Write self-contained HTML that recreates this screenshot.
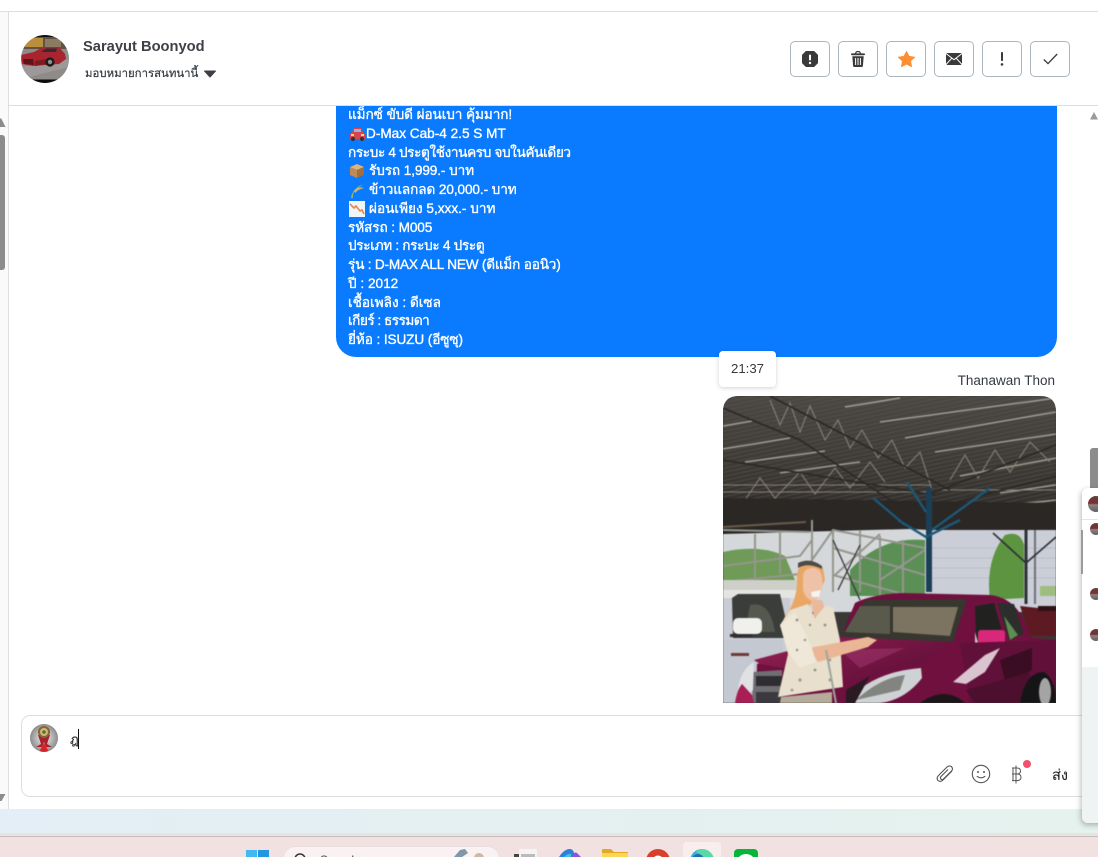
<!DOCTYPE html>
<html lang="th">
<head>
<meta charset="utf-8">
<title>Chat</title>
<style>
html,body{margin:0;padding:0;width:1098px;height:857px;overflow:hidden;background:#fff;}
body{position:relative;font-family:"Liberation Sans","Noto Sans CJK SC",sans-serif;color:#343a40;}
.a{position:absolute;}
.btn{position:absolute;top:41px;width:38px;height:34px;border:1px solid #adb5bd;border-radius:5px;background:#fff;display:flex;align-items:center;justify-content:center;}
.ln{position:absolute;left:348px;height:19px;line-height:19px;font-size:13.6px;color:#fff;white-space:nowrap;font-weight:500;-webkit-text-stroke:.35px #fff;}
</style>
</head>
<body>
<!-- window frame -->
<div class="a" style="left:0;top:0;width:1098px;height:11px;background:#fff"></div>
<div class="a" style="left:0;top:11px;width:1098px;height:1px;background:#dedede"></div>
<div class="a" style="left:0;top:12px;width:8px;height:797px;background:#fafafa"></div>
<div class="a" style="left:8px;top:12px;width:1px;height:797px;background:#dedede"></div>

<!-- left scrollbar -->
<svg class="a" style="left:0;top:118px" width="8" height="10"><path d="M0 9 V1 L1 0 L5.5 9Z" fill="#8c8c8c"/></svg>
<div class="a" style="left:0;top:135px;width:5px;height:135px;background:#8c8c8c;border-radius:0 3px 3px 0"></div>
<svg class="a" style="left:0;top:793px" width="8" height="10"><path d="M0 1 H5.5 L1.5 8 H0Z" fill="#8c8c8c"/></svg>

<!-- header -->
<div class="a" style="left:9px;top:105px;width:1089px;height:1px;background:#dedede"></div>
<svg class="a" style="left:21px;top:35px" width="48" height="48" viewBox="0 0 48 48">
<defs><clipPath id="av"><circle cx="24" cy="24" r="24"/></clipPath></defs>
<g clip-path="url(#av)" style="filter:blur(.35px)">
<rect width="48" height="48" fill="#8f8b89"/>
<rect width="48" height="14" fill="#5f5344"/>
<rect x="4" y="3" width="18" height="9" fill="#b98f3e"/>
<rect x="24" y="4" width="16" height="8" fill="#8d7a63"/>
<rect y="0" width="48" height="2" fill="#111"/>
<rect y="44.5" width="48" height="3.5" fill="#0c0c0c"/>
<path d="M0 32 L48 24 L48 32 L0 44Z" fill="#a9a4a1" opacity=".6"/>
<path d="M0 20 L13 17 L21 12.5 L38 12 L44 19 L45 24 L38 29 L12 31 L1 29Z" fill="#a8242e"/>
<path d="M20 17 L25 13.5 L36 13.5 L35 17Z" fill="#2f2c33"/>
<path d="M2 24 L12 24 L13 30 L3 29Z" fill="#5a1518"/>
<path d="M14 26 L26 24 L30 28 L14 31Z" fill="#7c1a20"/>
<circle cx="29" cy="27" r="4.6" fill="#1c1c1c"/>
<circle cx="29" cy="27" r="2.2" fill="#8f8f8f"/>
</g>
</svg>
<div class="a" style="left:83px;top:38px;font-size:14.7px;font-weight:700;line-height:18px;color:#3d4146;white-space:nowrap">Sarayut Boonyod</div>
<div class="a" style="left:85px;top:66px;font-size:11.4px;line-height:16px;color:#343a40;white-space:nowrap;-webkit-text-stroke:.2px #343a40">มอบหมายการสนทนานี้</div>
<svg class="a" style="left:204px;top:70px" width="12" height="8"><path d="M0.5 1 H11.5 L6 7Z" fill="#3d4146" stroke="#3d4146" stroke-linejoin="round"/></svg>

<!-- header buttons -->
<div class="btn" style="left:790px"><svg width="16" height="16" viewBox="0 0 16 16"><path d="M5 0 H11 L16 5 V11 L11 16 H5 L0 11 V5Z" fill="#3a3a3a" stroke="#3a3a3a" stroke-width="1.6" stroke-linejoin="round"/><rect x="7" y="3.5" width="2" height="6" rx="1" fill="#fff"/><circle cx="8" cy="12" r="1.2" fill="#fff"/></svg></div>
<div class="btn" style="left:838px"><svg width="14" height="16" viewBox="0 0 14 16"><rect x="0" y="2.4" width="14" height="1.8" rx=".9" fill="#3a3a3a"/><path d="M4.5 2.5 Q5 .5 7 .5 Q9 .5 9.5 2.5" fill="none" stroke="#3a3a3a" stroke-width="1.2"/><path d="M1.3 5.2 H12.7 L11.9 15 Q11.8 16 10.8 16 H3.2 Q2.2 16 2.1 15Z" fill="#3a3a3a"/><path d="M4.6 7 V14 M7 7 V14 M9.4 7 V14" stroke="#fff" stroke-width="1"/></svg></div>
<div class="btn" style="left:886px"><svg width="17" height="16" viewBox="0 0 17 16"><path d="M8.5 .6 L11 5.4 L16.5 6.2 L12.5 10 L13.5 15.5 L8.5 12.9 L3.5 15.5 L4.5 10 L.5 6.2 L6 5.4Z" fill="#fd8f32" stroke="#fd8f32" stroke-linejoin="round"/></svg></div>
<div class="btn" style="left:934px"><svg width="16" height="12" viewBox="0 0 16 12"><rect width="16" height="12" rx="1.2" fill="#3a3a3a"/><path d="M0 .5 L8 6.8 L16 .5 M0 11.5 L5.8 5.2 M16 11.5 L10.2 5.2" fill="none" stroke="#fff" stroke-width="1"/></svg></div>
<div class="btn" style="left:982px"><svg width="4" height="14" viewBox="0 0 4 14"><rect x="1" y="0" width="2" height="9" rx=".8" fill="#3a3a3a"/><circle cx="2" cy="12.4" r="1.3" fill="#3a3a3a"/></svg></div>
<div class="btn" style="left:1030px"><svg width="15" height="12" viewBox="0 0 15 12"><path d="M.8 6.5 L5 10.6 L14.2 1" fill="none" stroke="#3a3a3a" stroke-width="1.3"/></svg></div>

<!-- bubble -->
<div class="a" style="left:336px;top:106px;width:721px;height:251px;background:#0a7bff;border-radius:0 0 20px 20px"></div>
<div class="ln" style="top:105px;letter-spacing:-.1px">แม็กซ์ ขับดี ผ่อนเบา คุ้มมาก!</div>
<svg class="a" style="left:349px;top:127px" width="17" height="14" viewBox="0 0 17 14"><path d="M3 5 L5 1 H12 L14 5 L16 6.5 V12 H1 V6.5Z" fill="#d8434e"/><rect x="5" y="2" width="7" height="3" fill="#8fb7d8"/><circle cx="4" cy="12" r="2" fill="#333"/><circle cx="13" cy="12" r="2" fill="#333"/><rect x="2" y="7" width="3" height="2" fill="#ffd76a"/><rect x="12" y="7" width="3" height="2" fill="#ffd76a"/></svg>
<div class="ln" style="left:366px;top:124px">D-Max Cab-4 2.5 S MT</div>
<div class="ln" style="top:143px;letter-spacing:-.37px">กระบะ 4 ประตูใช้งานครบ จบในคันเดียว</div>
<svg class="a" style="left:349px;top:163px" width="16" height="16" viewBox="0 0 16 16"><path d="M8 1 L15 4 L8 7 L1 4Z" fill="#e0b27c"/><path d="M1 4 L8 7 V15 L1 12Z" fill="#c08a52"/><path d="M15 4 L8 7 V15 L15 12Z" fill="#a06f3e"/></svg>
<div class="ln" style="left:369px;top:161px;letter-spacing:-.1px">รับรถ 1,999.- บาท</div>
<svg class="a" style="left:349px;top:182px" width="16" height="16" viewBox="0 0 16 16"><path d="M2 16 Q3 7 14 2 Q9 6 5 10 Q4 12 4 16Z" fill="#8ab85c"/><path d="M5 9 Q8 4 15 6 Q10 7 6 11Z" fill="#c9b36a"/></svg>
<div class="ln" style="left:369px;top:180px;letter-spacing:-.1px">ข้าวแลกลด 20,000.- บาท</div>
<svg class="a" style="left:349px;top:201px" width="16" height="16" viewBox="0 0 16 16"><rect width="16" height="16" fill="#f2f5f8"/><path d="M1 3 L5 7 L7 5 L11 10 L13 9 L15 13" fill="none" stroke="#e2884e" stroke-width="1.6"/></svg>
<div class="ln" style="left:369px;top:199px">ผ่อนเพียง 5,xxx.- บาท</div>
<div class="ln" style="top:218px;letter-spacing:-.1px">รหัสรถ : M005</div>
<div class="ln" style="top:236px;letter-spacing:-.32px">ประเภท : กระบะ 4 ประตู</div>
<div class="ln" style="top:255px;letter-spacing:-.2px;left:348px">รุ่น : D-MAX ALL NEW (ดีแม็ก ออนิว)</div>
<div class="ln" style="top:274px">ปี : 2012</div>
<div class="ln" style="top:293px">เชื้อเพลิง : ดีเซล</div>
<div class="ln" style="top:311px;letter-spacing:-.5px">เกียร์ : ธรรมดา</div>
<div class="ln" style="top:330px;letter-spacing:-.1px">ยี่ห้อ : ISUZU (อีซูซุ)</div>

<!-- time tip -->
<div class="a" style="left:719px;top:351px;width:57px;height:36px;background:#fff;border-radius:4px;box-shadow:0 1px 5px rgba(0,0,0,.18);font-size:13.2px;line-height:36px;text-align:center;color:#343a40">21:37</div>
<div class="a" style="right:43px;top:373px;font-size:13.5px;line-height:16px;color:#343a40;white-space:nowrap">Thanawan Thon</div>

<!-- photo -->
<svg class="a" style="left:723px;top:396px" width="333" height="307" viewBox="723 396 333 307">
<defs>
<clipPath id="ph"><path d="M739 396 H1040 Q1056 396 1056 412 V703 H723 V412 Q723 396 739 396Z"/></clipPath>
<linearGradient id="roof" x1="0" y1="0" x2="0" y2="1"><stop offset="0" stop-color="#4b4844"/><stop offset=".55" stop-color="#3a3733"/><stop offset="1" stop-color="#232120"/></linearGradient>
<linearGradient id="hood" x1="0" y1="0" x2="1" y2=".6"><stop offset="0" stop-color="#9a2158"/><stop offset=".5" stop-color="#7a1745"/><stop offset="1" stop-color="#62103a"/></linearGradient>
<pattern id="ribs" width="7" height="4" patternUnits="userSpaceOnUse" patternTransform="rotate(-12)"><rect width="7" height="1" fill="#5a5750" opacity=".55"/></pattern>
</defs>
<g clip-path="url(#ph)">
<rect x="723" y="396" width="333" height="307" fill="#3a3835"/>
<g style="filter:blur(.55px)">
<rect x="723" y="396" width="333" height="150" fill="url(#roof)"/>
<rect x="723" y="396" width="333" height="115" fill="url(#ribs)"/>
<!-- roof strips -->
<g stroke="#a09b92" stroke-width="1.5" fill="none">
<path d="M845 407 L900 398 M880 422 L1056 398 M905 438 L1056 412 M935 452 L1056 434 M723 426 L752 421 M723 449 L790 438 M745 462 L825 451 M780 473 L860 462"/>
<path d="M960 476 L1056 458 M1000 493 L1056 485 M1010 505 L1056 500"/>
</g>
<!-- trusses -->
<g stroke="#857f75" stroke-width="1.1" fill="none">
<path d="M770 400 L780 425 L790 403 L800 432 L810 406 L825 440 L838 420 L850 448 L862 430 L878 458 L892 440 L905 468 L920 452 L932 490"/>
<path d="M950 480 L965 455 L978 478 L995 450 L1010 472 L1030 442 L1050 462"/>
<path d="M745 500 L760 478 L775 498 L800 472 L815 494 L835 468 L850 488 L870 462 L885 482"/>
<path d="M723 485 H930 M723 492 H930 M940 490 H1056"/>
</g>
<g stroke="#2a2725" stroke-width="1.6" fill="none">
<path d="M723 408 L800 440 L950 540 M770 396 L950 490 M723 460 L935 495 M930 494 L1056 445 M945 505 L1056 476"/>
</g>
<!-- far background below roof -->
<path d="M723 534 L1056 525 V612 H723Z" fill="#d5d8da"/>
<path d="M930 528 H1056 V612 H930Z" fill="#cbced7"/>
<g stroke="#a9adb5" stroke-width=".6"><path d="M930 548 H1056 M930 558 H1056 M930 568 H1056 M930 578 H1056"/></g>
<path d="M723 498 L1056 503 V530 L930 530 L810 524 L723 530Z" fill="#2a2725"/>
<path d="M723 527 L806 522" stroke="#6b5a4a" stroke-width="2"/>
<!-- trees -->
<path d="M723 552 Q760 544 785 556 L795 580 L723 580Z" fill="#6f9a57"/>
<path d="M850 570 Q880 536 925 540 V596 H850Z" fill="#5b8f55"/>
<path d="M990 600 Q985 560 1005 535 Q1020 530 1024 545 V598Z" fill="#5d9440"/>
<path d="M1040 586 H1056 V596 H1040Z" fill="#9fbd7e"/>
<!-- blue columns -->
<path d="M926 488 H932 V592 H926Z" fill="#1c3f58"/>
<path d="M873 498 L905 525 M907 482 L926 512 M990 488 L932 530 M898 520 L926 537 L960 520" stroke="#1d5878" stroke-width="2.4" fill="none"/>
<path d="M1026 530 V604" stroke="#2e3238" stroke-width="3"/>
<path d="M1035 530 V604" stroke="#6f7278" stroke-width="2"/>
<path d="M993 533 L1026 563 L1056 537" stroke="#2c2f33" stroke-width="1.6" fill="none"/>
<!-- steel rack -->
<g stroke="#96968f" stroke-width="2" fill="none">
<path d="M723 530 L810 532 M723 582 L800 574 L812 560 L833 530 L925 548 M812 520 V586 M833 548 L925 575 M833 575 L925 600 M833 530 V592 M860 530 V592 M880 536 V600 M903 540 V596"/>
<path d="M755 534 V578 M780 532 V574"/>
<path d="M723 566 L800 556 L812 540"/>
<path d="M835 575 L880 534 M880 580 L925 550"/>
</g>
<path d="M833 540 L860 600 M860 545 L838 590" stroke="#3c3c3c" stroke-width="1.4"/>
<rect x="723" y="580" width="95" height="10" fill="#cfcfc9"/>
<!-- white truck -->
<path d="M723 592 H790 V703 H723Z" fill="#c9ccd4"/>
<path d="M723 590 H802 V598 H723Z" fill="#e4e4e1"/>
<path d="M732 598 L738 594 H780 L790 638 H733 Z" fill="#3a3d3a"/>
<path d="M750 605 Q770 600 775 632 H745Z" fill="#55584f"/>
<rect x="733" y="618" width="29" height="16" rx="5" fill="#f0f0ec"/>
<rect x="730" y="634" width="22" height="3" fill="#2f3033"/>
<rect x="723" y="640" width="60" height="63" fill="#c4c8d1"/>
<rect x="731" y="653" width="18" height="3" fill="#6f3a38"/>
<!-- dark car at right rear -->
<path d="M1020 606 L1056 610 V636 H1030Z" fill="#5d1a22"/>
<rect x="1038" y="606" width="18" height="5" fill="#2e1114"/>
<!-- maroon car body -->
<path d="M855 603 Q870 595 900 593 L990 595 Q1020 598 1030 637 L1056 640 V703 H770 L756 703 L757 664 L840 640Z" fill="#6f103f"/>
<path d="M866 600 L967 599 L953 642 L840 637Z" fill="#37372f"/>
<path d="M893 607 L958 607 L950 636 L893 632Z" fill="#7c7460"/>
<path d="M860 606 L890 606 L890 634 L845 632Z" fill="#5a5a4c"/>
<path d="M840 637 L953 642 L918 664 L852 680 L760 664 L754 660Z" fill="url(#hood)"/>
<path d="M840 650 L905 648 L860 668Z" fill="#a93f78" opacity=".45"/>
<path d="M973 604 Q985 600 1003 602 L1028 640 L1002 650 L980 650Z" fill="#70123f"/>
<path d="M975 606 L994 603 L1003 634 L976 640Z" fill="#212220"/>
<path d="M997 603 L1014 604 L1024 634 L1009 640Z" fill="#2b2e2a"/>
<path d="M1004 616 L1018 635 L1010 640Z" fill="#5d8d52"/>
<rect x="978" y="630" width="27" height="19" rx="3" fill="#d9277b"/>
<path d="M975 632 L980 650 H975Z" fill="#cfc9d0"/>
<path d="M960 643 L1056 640 V703 H970Z" fill="#61103a"/>
<path d="M953 682 L985 655 L1000 648 L985 672 L966 684Z" fill="#d9c4cf"/>
<path d="M1000 660 L1032 648 V670 L1006 685Z" fill="#3a0d22"/>
<path d="M966 690 L1030 672 V703 H975Z" fill="#4d0f2e"/>
<path d="M1020 703 Q1025 672 1044 672 Q1056 680 1056 703Z" fill="#151517"/>
<ellipse cx="1045" cy="692" rx="6" ry="14" fill="#a4a4a4"/>
<path d="M920 703 Q945 685 965 703Z" fill="#1d1518"/>
<!-- grille and headlights -->
<path d="M753 672 L782 670 L782 703 H752Z" fill="#6f6e72"/>
<path d="M756 676 H782 V686 H756Z" fill="#2e2d31"/>
<path d="M756 692 H782 V703 H756Z" fill="#3b3a40"/>
<path d="M738 690 Q740 670 754 662 L753 690 L750 693Z" fill="#dfe1e3"/>
<path d="M735 703 Q737 690 742 684 L752 695 L754 703Z" fill="#a91e55"/>
<path d="M846 703 Q870 672 921 668 L922 678 Q905 700 880 703Z" fill="#cfd2d4"/>
<path d="M856 700 Q880 678 905 675 L900 690 Z" fill="#82847f"/>
<path d="M846 690 L870 676 L855 703 H846Z" fill="#2a1a22"/>
<!-- woman -->
<path d="M811 561 Q796 564 797 578 Q798 600 784 618 L783 630 L793 650 L800 615 L815 600 L825 580 L823 568Z" fill="#e9a766"/>
<path d="M803 580 Q802 568 813 568 Q824 568 822 588 Q820 600 812 601 Q805 598 803 590Z" fill="#eec2a6"/>
<path d="M798 563 Q810 557 822 566 L822 569 Q808 562 798 568Z" fill="#4f4a46"/>
<path d="M811 592 L821 590 L819 597 L812 597Z" fill="#f6f3ee"/>
<path d="M811 600 H822 L826 612 L814 618Z" fill="#e9b99a"/>
<path d="M790 610 L808 604 L815 618 L825 606 L833 607 L840 640 L843 687 L778 697 L788 654 L780 625 Z" fill="#e9dfcd"/>
<path d="M809 648 L868 637 L877 640 L868 647 L818 662 Z" fill="#eab696"/>
<path d="M780 625 L795 612 L812 648 L816 662 L800 668 L788 652 Z" fill="#efe7d7"/>
<path d="M780 703 L781 697 L832 692 L832 703 Z" fill="#b5ab9a"/>
<g fill="#8d9287"><circle cx="797" cy="620" r="1.4"/><circle cx="810" cy="625" r="1.2"/><circle cx="825" cy="625" r="1.4"/><circle cx="797" cy="650" r="1.2"/><circle cx="815" cy="670" r="1.4"/><circle cx="800" cy="680" r="1.5"/><circle cx="830" cy="680" r="1.4"/><circle cx="792" cy="690" r="1.3"/><circle cx="805" cy="640" r="1.2"/><circle cx="830" cy="660" r="1.2"/></g>
<path d="M826 650 L836 703" stroke="#9ca69a" stroke-width="2" fill="none"/>
</g>
</g>
</svg>

<!-- input -->
<div class="a" style="left:21px;top:715px;width:1075px;height:80px;border:1px solid #dedede;border-radius:9px;background:#fff"></div>
<svg class="a" style="left:30px;top:724px" width="28" height="28" viewBox="0 0 28 28">
<defs><clipPath id="av2"><circle cx="14" cy="14" r="14"/></clipPath><radialGradient id="g2"><stop offset="0" stop-color="#f4f4f4"/><stop offset="1" stop-color="#8c8c8c"/></radialGradient></defs>
<g clip-path="url(#av2)"><rect width="28" height="28" fill="url(#g2)"/>
<path d="M8 11 L11 20 L6 23 L12 23 L14 18 L16 23 L22 23 L17 20 L20 11Z" fill="#a9212a"/>
<path d="M9 28 L14 19 L19 28Z" fill="#d8222a"/>
<circle cx="14" cy="8" r="6" fill="#8a6238"/><circle cx="14" cy="8" r="4" fill="#d7b579"/><circle cx="14" cy="8" r="1.8" fill="#3f7d2e"/></g>
</svg>
<div class="a" style="left:70px;top:731px;font-size:13px;line-height:18px;color:#333;-webkit-text-stroke:.2px #333">ฎ</div>
<div class="a" style="left:78px;top:729px;width:1px;height:20px;background:#111"></div>
<svg class="a" style="left:935px;top:764px" width="20" height="20" viewBox="0 0 20 20"><path d="M17 7 L8 16 Q5.5 18.5 3 16.5 Q1 14 3.5 11.5 L12 3 Q14 1 16.5 2.6 Q18.5 5 16.5 7 L8.5 15 Q7 16.3 5.8 15 Q4.8 13.7 6 12.5 L13 5.5" fill="none" stroke="#555" stroke-width="1.1"/></svg>
<svg class="a" style="left:971px;top:764px" width="20" height="20" viewBox="0 0 20 20"><circle cx="10" cy="10" r="8.7" fill="none" stroke="#555" stroke-width="1.1"/><circle cx="7" cy="8" r="1" fill="#555"/><circle cx="13" cy="8" r="1" fill="#555"/><path d="M5.8 12.2 Q10 15.5 14.2 12.2" fill="none" stroke="#555" stroke-width="1.1"/></svg>
<svg class="a" style="left:1011px;top:765px" width="11" height="19" viewBox="0 0 11 19"><path d="M1 3 H6 Q9.5 3 9.5 6 Q9.5 9 6 9 H1 M6 9 Q10 9 10 12.3 Q10 15.6 6 15.6 H1 M2 3 V15.6 M5 .5 V18.5" fill="none" stroke="#555" stroke-width="1"/></svg>
<div class="a" style="left:1023px;top:760px;width:8px;height:8px;border-radius:50%;background:#f2506e"></div>
<div class="a" style="left:1052px;top:766px;font-size:14.6px;line-height:20px;color:#222;-webkit-text-stroke:.1px #222">ส่ง</div>

<!-- right scrollbar -->
<svg class="a" style="left:1090px;top:111px" width="8" height="9"><path d="M0 8.5 L4 1 L8 8.5Z" fill="#9a9a9a"/></svg>
<div class="a" style="left:1090px;top:448px;width:8px;height:41px;background:#8c8c8c;border-radius:3px 0 0 0"></div>

<!-- desktop strip and taskbar -->
<div class="a" style="left:0;top:809px;width:1098px;height:24px;background:linear-gradient(90deg,#e3eef6,#e4f0f1 50%,#e5f2ee)"></div>
<div class="a" style="left:0;top:833px;width:1098px;height:3px;background:#e6e3e3"></div>
<div class="a" style="left:0;top:836px;width:1098px;height:1px;background:#c9bcbc"></div>
<div class="a" style="left:0;top:837px;width:1098px;height:20px;background:#f2e1e1"></div>

<!-- popup on right -->
<div class="a" style="left:1082px;top:488px;width:30px;height:335px;background:#fff;border-radius:6px 0 0 6px;box-shadow:-1px 2px 6px rgba(0,0,0,.28)"></div>
<div class="a" style="left:1082px;top:667px;width:30px;height:156px;background:#eef3f4;border-radius:0 0 0 6px"></div>
<div class="a" style="left:1082px;top:519px;width:16px;height:1px;background:#e4e4e4"></div>
<div class="a" style="left:1081px;top:530px;width:2px;height:44px;background:#9a9a9a"></div>
<svg class="a" style="left:1082px;top:488px" width="16" height="160" viewBox="0 0 16 160">
<defs><linearGradient id="m" x1="0" y1="0" x2="0" y2="1"><stop offset="0" stop-color="#5f4436"/><stop offset=".45" stop-color="#7d2c34"/><stop offset=".55" stop-color="#8a8481"/><stop offset="1" stop-color="#5f5f5f"/></linearGradient></defs>
<circle cx="14" cy="16" r="8" fill="url(#m)"/>
<circle cx="14" cy="41" r="6" fill="url(#m)"/>
<circle cx="14" cy="106" r="6" fill="url(#m)"/>
<circle cx="14" cy="147" r="6" fill="url(#m)"/>
</svg>

<!-- taskbar icons -->
<div class="a" style="left:683px;top:842px;width:38px;height:15px;background:#f9eeee;border-radius:4px 4px 0 0"></div>
<div class="a" style="left:283px;top:846px;width:217px;height:14px;background:#faf2f2;border:1px solid #eadfdf;border-bottom:0;border-radius:12px 12px 0 0;box-sizing:border-box"></div>
<div class="a" style="left:246px;top:850px;width:11px;height:11px;background:#43b7f0"></div>
<div class="a" style="left:258px;top:850px;width:11px;height:11px;background:#2196e3"></div>
<svg class="a" style="left:293px;top:853px" width="16" height="4"><circle cx="7" cy="6" r="5" fill="none" stroke="#333" stroke-width="1.5"/></svg>
<div class="a" style="left:320px;top:853px;font-size:12px;line-height:14px;color:#444;height:4px;overflow:hidden">Search</div>
<svg class="a" style="left:452px;top:849px" width="34" height="8"><path d="M2 8 L8 1 L13 0 L16 4 L10 8Z" fill="#7f97a8"/><circle cx="27" cy="9" r="5" fill="#cdb7a7"/></svg>
<svg class="a" style="left:514px;top:849px" width="24" height="8"><rect x="5" y="0" width="18" height="8" fill="#f4f4f4"/><rect x="0" y="5" width="5" height="3" fill="#444"/><rect x="7" y="5" width="14" height="3" fill="#bbb"/></svg>
<svg class="a" style="left:558px;top:849px" width="24" height="8"><path d="M1 8 Q6 0 12 0 Q16 0 17 8Z" fill="#2f7fe0"/><path d="M14 8 Q16 2 19 4 L23 8Z" fill="#8a55d8"/><path d="M6 8 Q10 4 13 5 V8Z" fill="#44c3d8"/></svg>
<svg class="a" style="left:602px;top:849px" width="26" height="8"><path d="M0 8 V1 Q0 0 1 0 H9 L12 3 H26 V8Z" fill="#e5a824"/><rect x="0" y="4" width="26" height="4" fill="#f9d653"/></svg>
<svg class="a" style="left:646px;top:849px" width="24" height="8"><circle cx="12" cy="12" r="12" fill="#d8402e"/><circle cx="12" cy="12" r="5.5" fill="#fff"/><circle cx="12" cy="12" r="4" fill="#4285f4"/></svg>
<svg class="a" style="left:690px;top:849px" width="24" height="8"><circle cx="12" cy="12" r="12" fill="#39b0d9"/><path d="M12 0 A12 12 0 0 1 24 12 H14 Q14 6 6 3 Q9 0 12 0Z" fill="#5ad8a5"/><circle cx="8" cy="11" r="6" fill="#1c6fb5"/></svg>
<svg class="a" style="left:734px;top:849px" width="24" height="8"><rect width="24" height="20" rx="4" fill="#07b53b"/><ellipse cx="12" cy="11" rx="8" ry="6" fill="#fff"/></svg>
</body>
</html>
